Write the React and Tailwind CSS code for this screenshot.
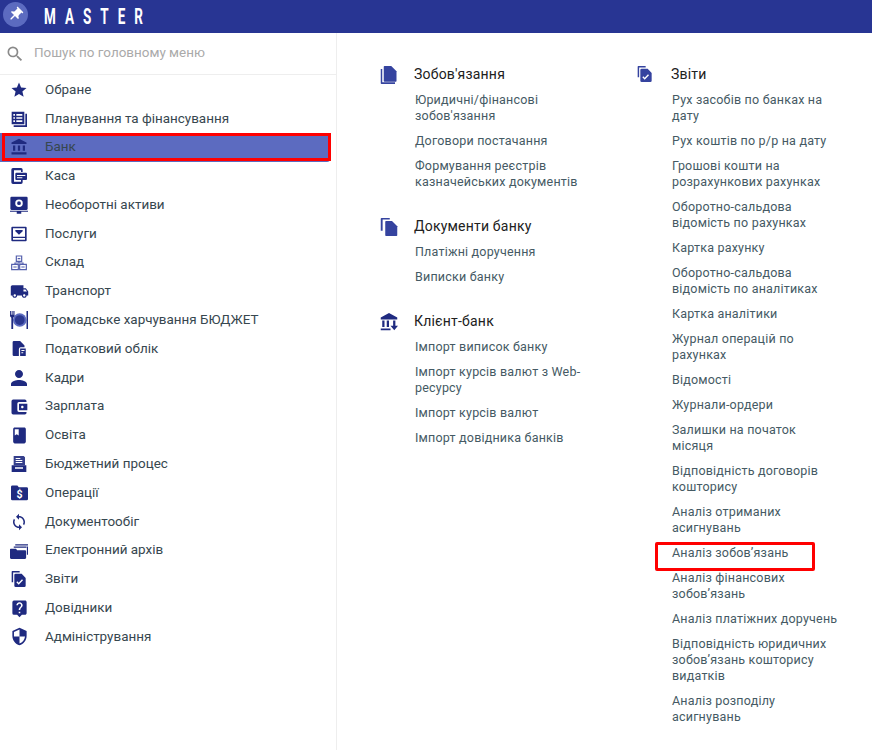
import React from "react";
import {
  MdStar, MdAccountBalance, MdLocalShipping, MdPerson, MdAccountBalanceWallet, MdBook,
  MdSync, MdLiveHelp, MdSecurity, MdSearch, MdPushPin,
} from "react-icons/md";

const NAVY = "#1f2a80";
const BLUE = "#35439f";

function Svg({ size = 16, color = NAVY, children }) {
  return (
    <svg width={size} height={size} viewBox="0 0 24 24" fill={color}>
      {children}
    </svg>
  );
}

const PlanIcon = () => (
  <Svg>
    <path fillRule="evenodd" d="M1 1h19v19H1zM3.500 4.500v2.500H6V4.500zM8 4.500v2.500h9V4.500zM3.500 9.300v2.500H6V9.300zM8 9.300v2.500h9V9.300zM3.500 14v2.500H6V14zM8 14v2.500h9V14z" />
    <path d="M21.500 4H24v20H4v-2.500h17.500z" />
  </Svg>
);
const CashIcon = () => (
  <Svg>
    <path fillRule="evenodd" d="M3 0h12a2.500 2.500 0 0 1 2.500 2.500V6H15V3.500H4.500v17H15V18h2.500v3.500A2.500 2.500 0 0 1 15 24H3a2.500 2.500 0 0 1-2.500-2.500v-19A2.500 2.500 0 0 1 3 0z" />
    <path fillRule="evenodd" d="M8 7h14.500A1.500 1.500 0 0 1 24 8.500v8a1.500 1.500 0 0 1-1.500 1.500H8a1.500 1.500 0 0 1-1.500-1.500v-8A1.500 1.500 0 0 1 8 7zM9 10.500V12h12.500v-1.500zM9 14v1.500h8V14z" />
  </Svg>
);
const AssetIcon = () => (
  <Svg size={18}>
    <path fillRule="evenodd" d="M2 1h20a1.500 1.500 0 0 1 1.500 1.500V17a1.500 1.500 0 0 1-1.500 1.500H2A1.500 1.500 0 0 1 .500 17V2.500A1.500 1.500 0 0 1 2 1zM12 4.500a5 5 0 1 0 0 10 5 5 0 0 0 0-10zM12 7a2.500 2.500 0 1 1 0 5 2.500 2.500 0 0 1 0-5z" />
    <path d="M0 19.500h24V21H0zM9 21h6v2.500H9z" />
  </Svg>
);
const ServiceIcon = () => (
  <Svg>
    <path fillRule="evenodd" d="M2 1h20a1.500 1.500 0 0 1 1.500 1.500v19A1.500 1.500 0 0 1 22 23H2a1.500 1.500 0 0 1-1.500-1.500v-19A1.500 1.500 0 0 1 2 1zM3 3.500V16h18V3.500zM3 18v2.500h18V18z" />
    <path d="M6.500 6h11v2L12 13 6.500 8z" />
  </Svg>
);
const StockIcon = () => (
  <svg width="16" height="16" viewBox="0 0 24 24" fill="none" stroke="#5560ad" strokeWidth="1.800">
    <path d="M8 1.500h8v8H8zM1 14h10v8H1zM13 14h10v8H13z" />
    <path d="M10 5.500h4M3.500 18h5M15.500 18h5" />
    <path d="M12 9.500V12M6 14v-2h12v2" />
  </svg>
);
const FoodIcon = () => (
  <Svg size={18}>
    <circle cx="13" cy="12" r="9" fill="#5c6bc0" />
    <circle cx="13" cy="12" r="6.500" fill="#2b3890" />
    <path d="M0 0h1.200v5h1V0h1.300v5h1V0H6v7L4.200 9v15H1.800V9L0 7zM22 0h2v24h-2z" />
  </Svg>
);
const TaxIcon = () => (
  <Svg size={15}>
    <path d="M3 0h10l7 7v3h-6a3 3 0 0 0-3 3v11H3a2 2 0 0 1-2-2V2a2 2 0 0 1 2-2z" />
    <path fillRule="evenodd" d="M13 12h9v12h-9zM15 14.500V16h5v-1.500zM15 18v1.500h3V18z" />
  </Svg>
);
const BudgetIcon = () => (
  <Svg>
    <path fillRule="evenodd" d="M4 0h15l2 2v12H4zM7 3v1.500h7V3zM7 6v1.500h10V6zM7 9v1.500h10V9z" opacity=".9" />
    <path fillRule="evenodd" d="M1 14h22v10H1zM6 17v2h12v-2z" />
  </Svg>
);
const OperIcon = () => (
  <svg width="17" height="17" viewBox="0 0 24 24">
    <path fill={NAVY} d="M2 2h7l2 2.500h11a2 2 0 0 1 2 2V21a2 2 0 0 1-2 2H2a2 2 0 0 1-2-2V4a2 2 0 0 1 2-2z" />
    <text x="12" y="20" textAnchor="middle" fontSize="15" fontWeight="700" fill="#fff" fontFamily="Roboto, sans-serif">$</text>
  </svg>
);
const ArchiveIcon = () => (
  <Svg size={18}>
    <path d="M7 3h17v1.500H7zM5 6h17v1.500H5zM22.500 6H24v11h-1.500z" />
    <path d="M1 9h7l1.500 2H20a1.500 1.500 0 0 1 1.500 1.500V21a1.500 1.500 0 0 1-1.500 1.500H1.500A1.500 1.500 0 0 1 0 21V10a1 1 0 0 1 1-1z" />
  </Svg>
);
const ReportShape = ({ size, color }) => (
  <Svg size={size} color={color}>
    <path d="M2 0h11v2.200H3.200V17H1V1a1 1 0 0 1 1-1z" />
    <path fillRule="evenodd" d="M7 4h9l6 6.500V22a2 2 0 0 1-2 2H7a2 2 0 0 1-2-2V6a2 2 0 0 1 2-2zM9.500 15.500L8 17l3.500 3.500L18 14l-1.500-1.500-5 5z" />
  </Svg>
);
const ReportIcon = () => <ReportShape size={16} />;
const SectionReportIcon = () => <ReportShape size={16} color={BLUE} />;
const DocStackIcon = () => (
  <Svg size={18} color={BLUE}>
    <path d="M6 0h9l7 7v13a1 1 0 0 1-1 1H6a1 1 0 0 1-1-1V1a1 1 0 0 1 1-1z" />
    <path d="M1 4h2v17.500h17V24H2a1 1 0 0 1-1-1z" />
  </Svg>
);
const DocCopyIcon = () => (
  <Svg size={18} color={BLUE}>
    <path d="M8 4h8l7 7v12a1 1 0 0 1-1 1H8a1 1 0 0 1-1-1V5a1 1 0 0 1 1-1z" />
    <path d="M2 0h11v2H3.500v15H1V1a1 1 0 0 1 1-1z" />
  </Svg>
);
const ClientBankIcon = () => (
  <Svg size={18} color={NAVY}>
    <path d="M12 0l11 6v2.500H1V6zM1 20.500h13V23H1zM3 10h3v8.500H3zM9 10h3v8.500H9z" />
    <path d="M17.500 10h3v7H24l-5 6-5-6h3.500z" />
  </Svg>
);

const md = (Icon, size) => () => <Icon size={size} color={NAVY} />;

const menu = [
  ["Обране", md(MdStar, 18)],
  ["Планування та фінансування", PlanIcon],
  ["Банк", md(MdAccountBalance, 18)],
  ["Каса", CashIcon],
  ["Необоротні активи", AssetIcon],
  ["Послуги", ServiceIcon],
  ["Склад", StockIcon],
  ["Транспорт", md(MdLocalShipping, 19)],
  ["Громадське харчування БЮДЖЕТ", FoodIcon],
  ["Податковий облік", TaxIcon],
  ["Кадри", md(MdPerson, 24)],
  ["Зарплата", md(MdAccountBalanceWallet, 20)],
  ["Освіта", md(MdBook, 19)],
  ["Бюджетний процес", BudgetIcon],
  ["Операції", OperIcon],
  ["Документообіг", md(MdSync, 18)],
  ["Електронний архів", ArchiveIcon],
  ["Звіти", ReportIcon],
  ["Довідники", md(MdLiveHelp, 19)],
  ["Адміністрування", md(MdSecurity, 19)],
];

const leftSections = [
  {
    title: "Зобов'язання",
    Icon: DocStackIcon,
    items: ["Юридичні/фінансові зобов'язання", "Договори постачання", "Формування реєстрів казначейських документів"],
  },
  { title: "Документи банку", Icon: DocCopyIcon, items: ["Платіжні доручення", "Виписки банку"] },
  {
    title: "Клієнт-банк",
    Icon: ClientBankIcon,
    items: ["Імпорт виписок банку", "Імпорт курсів валют з Web-ресурсу", "Імпорт курсів валют", "Імпорт довідника банків"],
  },
];

const reports = [
  "Рух засобів по банках на дату",
  "Рух коштів по р/р на дату",
  "Грошові кошти на розрахункових рахунках",
  "Оборотно-сальдова відомість по рахунках",
  "Картка рахунку",
  "Оборотно-сальдова відомість по аналітиках",
  "Картка аналітики",
  "Журнал операцій по рахунках",
  "Відомості",
  "Журнали-ордери",
  "Залишки на початок\nмісяця",
  "Відповідність договорів кошторису",
  "Аналіз отриманих асигнувань",
  "Аналіз зобовʼязань",
  "Аналіз фінансових зобовʼязань",
  "Аналіз платіжних доручень",
  "Відповідність юридичних зобовʼязань кошторису видатків",
  "Аналіз розподілу асигнувань",
];

function Section({ title, Icon, items, highlight }) {
  return (
    <div className="flex mb-[27px]">
      <div className="w-[34px] shrink-0 pt-px">
        <Icon />
      </div>
      <div className="w-[172px]">
        <div className="text-[14px] leading-[18px] text-[#212121] tracking-[0.2px]">{title}</div>
        <ul className="mt-[9px] ml-px flex flex-col gap-[9px]">
          {items.map((item) => (
            <li key={item} className="relative whitespace-pre-line text-[12.5px] leading-[16px] text-[#455a64] tracking-[0.2px]">
              {item}
              {item === highlight && (
                <span className="absolute left-[-17px] top-[-3px] w-[160px] h-[29px] border-[3px] border-[#f00] rounded-[2px]" />
              )}
            </li>
          ))}
        </ul>
      </div>
    </div>
  );
}

export default function App() {
  return (
    <div className="h-[750px] w-[872px] overflow-hidden bg-white font-['Roboto',sans-serif]">
      <header className="flex h-[33px] items-start bg-[#283593]">
        <div className="ml-[3px] mt-[2px] flex h-[25px] w-[25px] items-center justify-center rounded-full bg-[#5c6bc0]">
          <MdPushPin size={17} color="#fff" className="rotate-45" />
        </div>
        <span className="ml-[16px] mt-[4px] origin-left scale-x-[0.6] text-[22.5px] font-bold leading-[24px] tracking-[15px] text-white">
          MASTER
        </span>
      </header>
      <div className="flex h-[717px]">
        <aside className="w-[337px] shrink-0 border-r border-[#eeeeee]">
          <div className="flex h-[42px] items-center border-b border-[#eeeeee] pl-[5px]">
            <MdSearch size={20} color="#8a8a8a" />
            <span className="ml-[9px] text-[13.45px] text-[#aaaaaa]">Пошук по головному меню</span>
          </div>
          <nav className="pt-[0.4px]">
            {menu.map(([label, Icon]) => {
              const active = label === "Банк";
              return (
                <div
                  key={label}
                  className={`relative flex h-[28.8px] w-[330px] items-center rounded-r-[3px] ${active ? "bg-[#5c6bc0]" : ""}`}
                >
                  <div className="ml-[7px] mr-[14px] flex w-[24px] shrink-0 items-center justify-center">
                    <Icon />
                  </div>
                  <span className="text-[13.45px] text-[#37474f]">{label}</span>
                  {active && (
                    <span className="absolute left-[2px] top-0 h-[28px] w-[329px] border-[3px] border-[#f00]" />
                  )}
                </div>
              );
            })}
          </nav>
        </aside>
        <main className="flex pt-[32px]">
          <div className="ml-[43px] w-[257px]">
            {leftSections.map((s) => (
              <Section key={s.title} {...s} />
            ))}
          </div>
          <div>
            <Section title="Звіти" Icon={SectionReportIcon} items={reports} highlight="Аналіз зобовʼязань" />
          </div>
        </main>
      </div>
    </div>
  );
}
